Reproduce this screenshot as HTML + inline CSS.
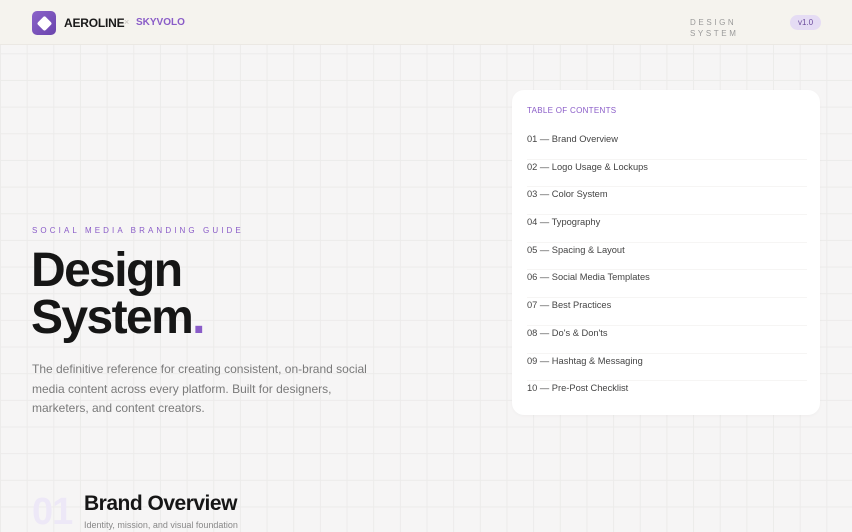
<!DOCTYPE html>
<html><head><meta charset="utf-8"><style>
*{margin:0;padding:0;box-sizing:border-box}
html,body{width:852px;height:532px;overflow:hidden}
body{font-family:"Liberation Sans",sans-serif;background-color:#f6f5f5;
background-image:linear-gradient(#ecebea 1px,transparent 1px),linear-gradient(90deg,#ecebea 1px,transparent 1px);
background-size:26.67px 26.67px;background-position:0 0;position:relative}
.hdr{position:absolute;left:0;top:0;width:852px;height:45px;background:#f5f3ee;border-bottom:1px solid #ebe8e3}
.logo{position:absolute;left:32px;top:11px;width:24px;height:24px;border-radius:5px;background:linear-gradient(135deg,#8b63c9,#6a44ad)}
.logo i{position:absolute;left:6.5px;top:6.5px;width:11px;height:11px;background:#fff;transform:rotate(45deg);border-radius:2px}
.brand{position:absolute;left:64px;top:16px;font-size:12px;font-weight:bold;color:#1a1a1a;letter-spacing:-0.2px}
.x{position:absolute;left:124px;top:17px;font-size:9px;color:#c9c5c0}
.sky{position:absolute;left:136px;top:17px;font-size:10px;font-weight:bold;color:#8a5cc8}
.ds{position:absolute;left:690px;top:17px;font-size:8px;letter-spacing:2.6px;color:#9a9a9a;line-height:11px}
.ver{position:absolute;left:790px;top:15px;width:31px;height:15px;border-radius:8px;background:#e5dcf4;color:#6a4a9c;font-size:8px;text-align:center;line-height:15px}
.eyebrow{position:absolute;left:32px;top:226px;font-size:8px;letter-spacing:3.1px;color:#8a5cc8}
h1{position:absolute;left:31px;top:247px;font-size:48px;line-height:47px;font-weight:bold;color:#161616;letter-spacing:-1.6px}
h1 span{color:#8a5cc8}
.lead{position:absolute;left:32px;top:360px;width:350px;font-size:12px;line-height:19.5px;color:#7a7a7a}
.card{position:absolute;left:512px;top:90px;width:308px;height:325px;background:#fff;border-radius:12px;box-shadow:0 1px 3px rgba(0,0,0,0.03)}
.toct{position:absolute;left:15px;top:16px;font-size:8px;letter-spacing:0.3px;color:#8a5cc8}
.items{position:absolute;left:15px;top:42px;width:280px}
.it{height:27.7px;font-size:9.3px;color:#444;line-height:14px;border-bottom:1px solid #f6f5f4}
.it:last-child{border:none}
.num{position:absolute;left:32px;top:491px;font-size:38px;font-weight:bold;color:#ede8f7;letter-spacing:-1px}
.h2{position:absolute;left:84px;top:492px;font-size:21px;font-weight:bold;color:#161616;letter-spacing:-0.5px}
.sub{position:absolute;left:84px;top:520px;font-size:9px;color:#888}
</style></head><body>
<div class="hdr">
<div class="logo"><i></i></div>
<div class="brand">AEROLINE</div><div class="x">×</div><div class="sky">SKYVOLO</div>
<div class="ds">DESIGN<br>SYSTEM</div>
<div class="ver">v1.0</div>
</div>
<div class="eyebrow">SOCIAL MEDIA BRANDING GUIDE</div>
<h1>Design<br>System<span>.</span></h1>
<div class="lead">The definitive reference for creating consistent, on-brand social media content across every platform. Built for designers, marketers, and content creators.</div>
<div class="card">
<div class="toct">TABLE OF CONTENTS</div>
<div class="items">
<div class="it">01 — Brand Overview</div>
<div class="it">02 — Logo Usage &amp; Lockups</div>
<div class="it">03 — Color System</div>
<div class="it">04 — Typography</div>
<div class="it">05 — Spacing &amp; Layout</div>
<div class="it">06 — Social Media Templates</div>
<div class="it">07 — Best Practices</div>
<div class="it">08 — Do's &amp; Don'ts</div>
<div class="it">09 — Hashtag &amp; Messaging</div>
<div class="it">10 — Pre-Post Checklist</div>
</div>
</div>
<div class="num">01</div>
<div class="h2">Brand Overview</div>
<div class="sub">Identity, mission, and visual foundation</div>
</body></html>
